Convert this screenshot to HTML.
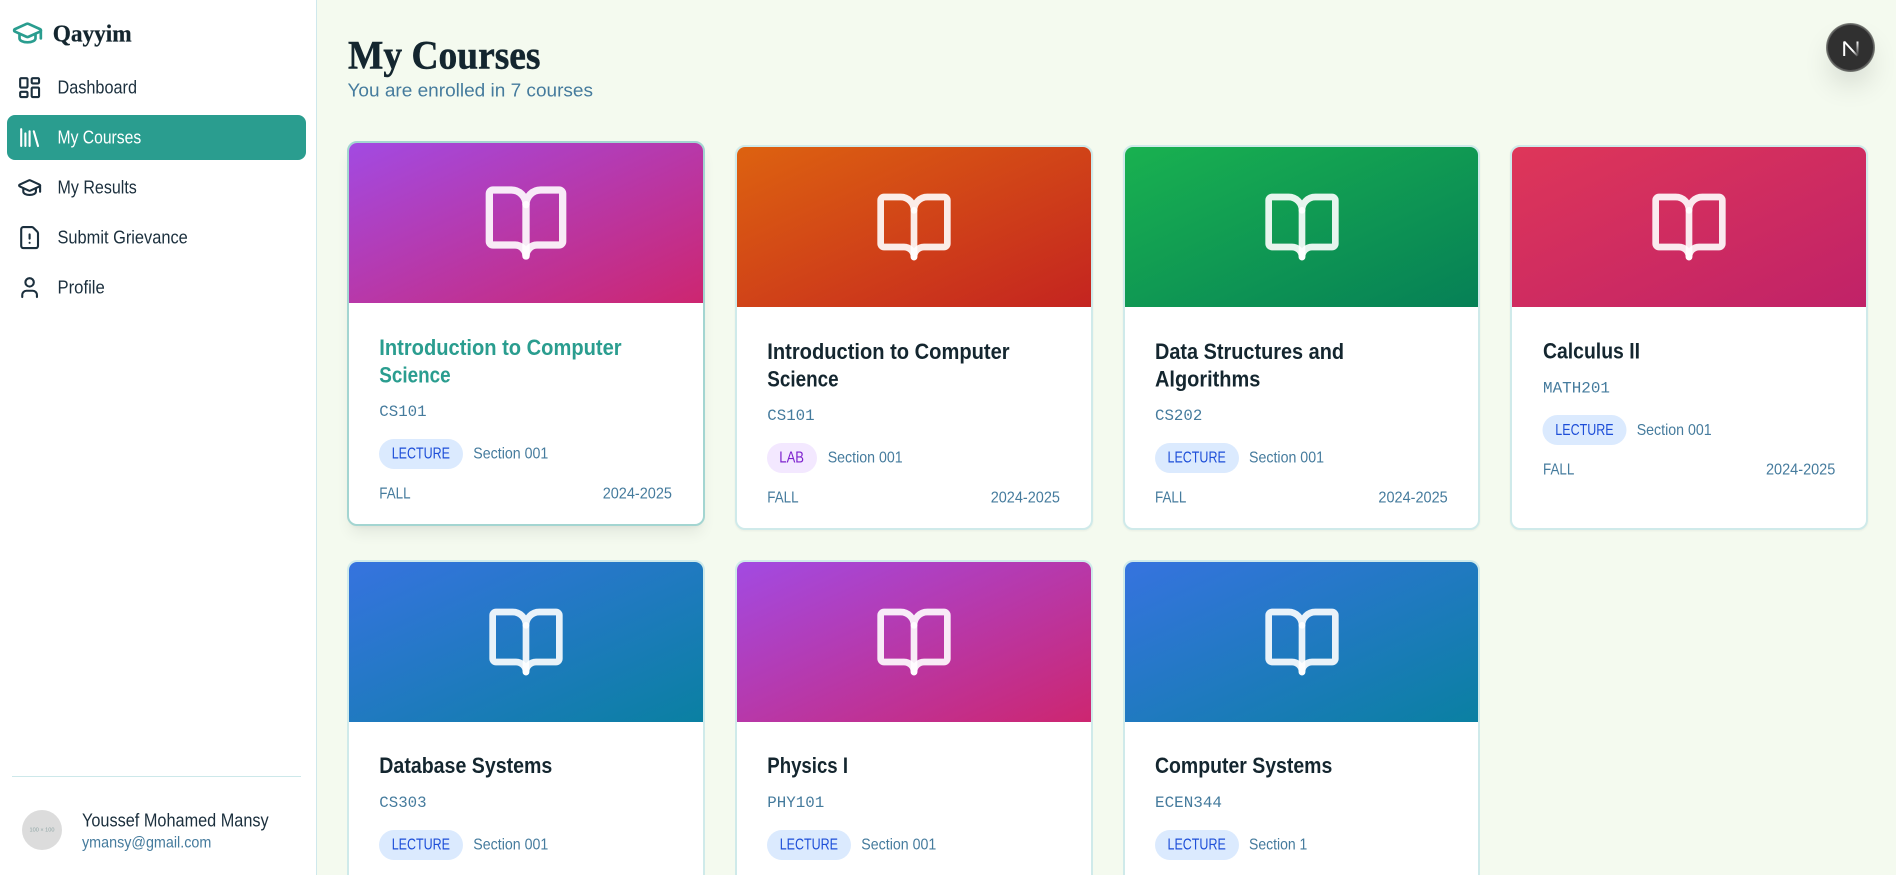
<!DOCTYPE html>
<html lang="en">
<head>
<meta charset="utf-8">
<title>My Courses</title>
<style>
html,body{margin:0;padding:0;width:1896px;height:875px;overflow:hidden;background:#f4faef;font-family:"Liberation Sans",sans-serif}
#page{position:relative;width:1896px;height:875px;overflow:hidden;background:#f4faef}
.abs{position:absolute}
#sidebar{left:0;top:0;width:316px;height:875px;background:#fff;border-right:1px solid #cfe8ec}
#active{left:7px;top:115px;width:299px;height:45px;border-radius:8px;background:#2a9d8f}
#divider{left:12px;top:776px;width:289px;height:1px;background:#cde8ea}
#avatar{left:22px;top:810px;width:40px;height:40px;border-radius:50%;background:#dcdcdc}
.card{position:absolute;box-sizing:border-box;width:358px;background:#fff;border:2px solid #cfeaea;border-radius:10px;overflow:hidden;box-shadow:0 1px 2px rgba(0,0,0,.05)}
.card.cut{height:315px;border-bottom:0;border-radius:10px 10px 0 0;box-shadow:none}
.card.hov{border-color:#a3d5d1;box-shadow:0 10px 15px -3px rgba(0,0,0,.07),0 4px 6px -4px rgba(0,0,0,.07)}
.head{height:160px}
.purple{background:linear-gradient(to bottom right,#a24ae2,#cd2670)}
.orange{background:linear-gradient(to bottom right,#dd6210,#c42420)}
.green{background:linear-gradient(to bottom right,#19b150,#068056)}
.rose{background:linear-gradient(to bottom right,#de3659,#c02268)}
.blue{background:linear-gradient(to bottom right,#3673df,#0a80a2)}
#nbtn{left:1827px;top:24px;width:47px;height:47px;border-radius:50%;background:#303030;box-shadow:0 0 0 1px rgba(0,0,0,.5),inset 0 0 0 1px rgba(255,255,255,.2),0 16px 32px -8px rgba(0,0,0,.24)}
#overlay{position:absolute;left:0;top:0}
.nav{font:18px "Liberation Sans",sans-serif;fill:#1b2f3d}
.t{font:bold 22px "Liberation Sans",sans-serif;fill:#14262f}
.c{font:16px "Liberation Mono",monospace;fill:#457b9d}
.b{font:16px "Liberation Sans",sans-serif;fill:#1d4ed8}
.s{font:16px "Liberation Sans",sans-serif;fill:#457b9d}
.ic{fill:none;stroke:#1b2f3d;stroke-width:2;stroke-linecap:round;stroke-linejoin:round}
.bk{fill:none;stroke:rgba(255,255,255,.9);stroke-width:2;stroke-linecap:round;stroke-linejoin:round}
</style>
</head>
<body>
<div id="page">
<div id="sidebar" class="abs"></div>
<div id="active" class="abs"></div>
<div id="divider" class="abs"></div>
<div id="avatar" class="abs"></div>

<div class="card hov" style="left:347px;top:141px;height:385px"><div class="head purple"></div></div>
<div class="card" style="left:735px;top:145px;height:385px"><div class="head orange"></div></div>
<div class="card" style="left:1123px;top:145px;width:357px;height:385px"><div class="head green"></div></div>
<div class="card" style="left:1510px;top:145px;height:385px"><div class="head rose"></div></div>
<div class="card cut" style="left:347px;top:560px"><div class="head blue"></div></div>
<div class="card cut" style="left:735px;top:560px"><div class="head purple"></div></div>
<div class="card cut" style="left:1123px;top:560px;width:357px"><div class="head blue"></div></div>

<div id="nbtn" class="abs"></div>

<svg id="overlay" width="1896" height="875" viewBox="0 0 1896 875" xmlns="http://www.w3.org/2000/svg">
<defs>
<linearGradient id="nd" x1="0" y1="0" x2="1" y2="1"><stop offset="0" stop-color="#fff"/><stop offset=".65" stop-color="#fff"/><stop offset="1" stop-color="#fff" stop-opacity=".1"/></linearGradient>
<linearGradient id="nr" gradientUnits="userSpaceOnUse" x1="0" y1="41" x2="0" y2="56"><stop offset="0" stop-color="#fff"/><stop offset="1" stop-color="#fff" stop-opacity="0"/></linearGradient>
<symbol id="book" viewBox="0 0 24 24"><path class="bk" d="M12 7v14"/><path class="bk" d="M3 18a1 1 0 0 1-1-1V4a1 1 0 0 1 1-1h5a4 4 0 0 1 4 4 4 4 0 0 1 4-4h5a1 1 0 0 1 1 1v13a1 1 0 0 1-1 1h-6a3 3 0 0 0-3 3 3 3 0 0 0-3-3z"/></symbol>
</defs>

<!-- logo -->
<g transform="translate(11.5 17) scale(1.3333)" fill="none" stroke="#2a9d8f" stroke-width="2" stroke-linecap="round" stroke-linejoin="round">
<path d="M21.42 10.922a1 1 0 0 0-.019-1.838L12.83 5.18a2 2 0 0 0-1.66 0L2.6 9.08a1 1 0 0 0 0 1.832l8.57 3.908a2 2 0 0 0 1.66 0z"/><path d="M22 10v6"/><path d="M6 12.5V16a6 3 0 0 0 12 0v-3.5"/>
</g>
<text x="52.7" y="41.5" textLength="79" lengthAdjust="spacingAndGlyphs" style="font:bold 24px 'Liberation Serif',serif;fill:#14262f;stroke:#14262f;stroke-width:.25">Qayyim</text>

<!-- nav -->
<g transform="translate(17 75) scale(1.05)" class="ic"><rect x="3" y="3" width="7" height="9" rx="1"/><rect x="14" y="3" width="7" height="5" rx="1"/><rect x="14" y="12" width="7" height="9" rx="1"/><rect x="3" y="16" width="7" height="5" rx="1"/></g>
<text class="nav" x="57.5" y="93.7" textLength="79.5" lengthAdjust="spacingAndGlyphs">Dashboard</text>

<g transform="translate(17 125) scale(1.05)" class="ic" style="stroke:#fff"><path d="m16 6 4 14"/><path d="M12 6v14"/><path d="M8 8v12"/><path d="M4 4v16"/></g>
<text class="nav" style="fill:#fff" x="57.5" y="143.7" textLength="83.7" lengthAdjust="spacingAndGlyphs">My Courses</text>

<g transform="translate(17 175) scale(1.05)" class="ic"><path d="M21.42 10.922a1 1 0 0 0-.019-1.838L12.83 5.18a2 2 0 0 0-1.66 0L2.6 9.08a1 1 0 0 0 0 1.832l8.57 3.908a2 2 0 0 0 1.66 0z"/><path d="M22 10v6"/><path d="M6 12.5V16a6 3 0 0 0 12 0v-3.5"/></g>
<text class="nav" x="57.5" y="193.7" textLength="79.3" lengthAdjust="spacingAndGlyphs">My Results</text>

<g transform="translate(17 225) scale(1.05)" class="ic"><path d="M6 22a2 2 0 0 1-2-2V4a2 2 0 0 1 2-2h8a2.4 2.4 0 0 1 1.704.706l3.588 3.588A2.4 2.4 0 0 1 20 8v12a2 2 0 0 1-2 2z"/><path d="M12 9v4"/><path d="M12 17h.01"/></g>
<text class="nav" x="57.5" y="243.7" textLength="130.3" lengthAdjust="spacingAndGlyphs">Submit Grievance</text>

<g transform="translate(17 275) scale(1.05)" class="ic"><path d="M19 21v-2a4 4 0 0 0-4-4H9a4 4 0 0 0-4 4v2"/><circle cx="12" cy="7" r="4"/></g>
<text class="nav" x="57.5" y="293.7" textLength="47.3" lengthAdjust="spacingAndGlyphs">Profile</text>

<!-- user -->
<text x="29.5" y="831.7" textLength="25" lengthAdjust="spacingAndGlyphs" style="font:5.5px 'Liberation Sans',sans-serif;fill:#8fa5a5">100 × 100</text>
<text class="nav" x="82" y="826.4" textLength="186.7" lengthAdjust="spacingAndGlyphs">Youssef Mohamed Mansy</text>
<text class="s" x="82" y="847.4" textLength="129.3" lengthAdjust="spacingAndGlyphs">ymansy@gmail.com</text>

<!-- header -->
<text x="348" y="68.3" textLength="192.5" lengthAdjust="spacingAndGlyphs" style="font:bold 40px 'Liberation Serif',serif;fill:#14262f;stroke:#14262f;stroke-width:.5">My Courses</text>
<text x="347.5" y="96.7" textLength="245.5" lengthAdjust="spacingAndGlyphs" style="font:18px 'Liberation Sans',sans-serif;fill:#457b9d">You are enrolled in 7 courses</text>

<!-- card 1 (hover) -->
<g transform="translate(348 141)">
<use href="#book" x="134" y="38" width="88" height="88"/>
<text class="t" style="fill:#2a9d8f" x="31.3" y="214" textLength="242.3" lengthAdjust="spacingAndGlyphs">Introduction to Computer</text>
<text class="t" style="fill:#2a9d8f" x="31.3" y="241.7" textLength="71.3" lengthAdjust="spacingAndGlyphs">Science</text>
<text class="c" x="31.3" y="275" textLength="47.3" lengthAdjust="spacingAndGlyphs">CS101</text>
<rect x="31" y="298" width="84" height="30" rx="15" fill="#dbeafe"/>
<text class="b" x="43.7" y="317.6" textLength="58.3" lengthAdjust="spacingAndGlyphs">LECTURE</text>
<text class="s" x="125.3" y="317.6" textLength="75" lengthAdjust="spacingAndGlyphs">Section 001</text>
<text class="s" x="31.3" y="357.7" textLength="31.3" lengthAdjust="spacingAndGlyphs">FALL</text>
<text class="s" x="254.7" y="357.7" textLength="69.3" lengthAdjust="spacingAndGlyphs">2024-2025</text>
</g>

<!-- card 2 -->
<g transform="translate(736 145)">
<use href="#book" x="138" y="42" width="80" height="80"/>
<text class="t" x="31.3" y="214" textLength="242.3" lengthAdjust="spacingAndGlyphs">Introduction to Computer</text>
<text class="t" x="31.3" y="241.7" textLength="71.3" lengthAdjust="spacingAndGlyphs">Science</text>
<text class="c" x="31.3" y="275" textLength="47.3" lengthAdjust="spacingAndGlyphs">CS101</text>
<rect x="31" y="298" width="50" height="30" rx="15" fill="#f3e8ff"/>
<text class="b" style="fill:#7e22ce" x="43.3" y="317.6" textLength="24.7" lengthAdjust="spacingAndGlyphs">LAB</text>
<text class="s" x="91.7" y="317.6" textLength="75" lengthAdjust="spacingAndGlyphs">Section 001</text>
<text class="s" x="31.3" y="357.7" textLength="31.3" lengthAdjust="spacingAndGlyphs">FALL</text>
<text class="s" x="254.7" y="357.7" textLength="69.3" lengthAdjust="spacingAndGlyphs">2024-2025</text>
</g>

<!-- card 3 -->
<g transform="translate(1124 145)">
<use href="#book" x="138" y="42" width="80" height="80"/>
<text class="t" x="31" y="214" textLength="189" lengthAdjust="spacingAndGlyphs">Data Structures and</text>
<text class="t" x="31" y="241.7" textLength="105.3" lengthAdjust="spacingAndGlyphs">Algorithms</text>
<text class="c" x="31" y="275" textLength="47.3" lengthAdjust="spacingAndGlyphs">CS202</text>
<rect x="31" y="298" width="84" height="30" rx="15" fill="#dbeafe"/>
<text class="b" x="43.5" y="317.6" textLength="58.3" lengthAdjust="spacingAndGlyphs">LECTURE</text>
<text class="s" x="125" y="317.6" textLength="75" lengthAdjust="spacingAndGlyphs">Section 001</text>
<text class="s" x="31" y="357.7" textLength="31.3" lengthAdjust="spacingAndGlyphs">FALL</text>
<text class="s" x="254.4" y="357.7" textLength="69.3" lengthAdjust="spacingAndGlyphs">2024-2025</text>
</g>

<!-- card 4 -->
<g transform="translate(1512 145)">
<use href="#book" x="137" y="42" width="80" height="80"/>
<text class="t" x="31" y="213.5" textLength="97" lengthAdjust="spacingAndGlyphs">Calculus II</text>
<text class="c" x="31" y="247.3" textLength="67" lengthAdjust="spacingAndGlyphs">MATH201</text>
<rect x="30.5" y="270" width="84" height="30" rx="15" fill="#dbeafe"/>
<text class="b" x="43.3" y="290" textLength="58.3" lengthAdjust="spacingAndGlyphs">LECTURE</text>
<text class="s" x="124.7" y="290" textLength="75" lengthAdjust="spacingAndGlyphs">Section 001</text>
<text class="s" x="31" y="329.7" textLength="31.3" lengthAdjust="spacingAndGlyphs">FALL</text>
<text class="s" x="254" y="329.7" textLength="69.3" lengthAdjust="spacingAndGlyphs">2024-2025</text>
</g>

<!-- card 5 -->
<g transform="translate(348 560)">
<use href="#book" x="138" y="42" width="80" height="80"/>
<text class="t" x="31.3" y="213" textLength="173" lengthAdjust="spacingAndGlyphs">Database Systems</text>
<text class="c" x="31.3" y="247" textLength="47.3" lengthAdjust="spacingAndGlyphs">CS303</text>
<rect x="31" y="270" width="84" height="30" rx="15" fill="#dbeafe"/>
<text class="b" x="43.7" y="289.7" textLength="58.3" lengthAdjust="spacingAndGlyphs">LECTURE</text>
<text class="s" x="125.3" y="289.7" textLength="75" lengthAdjust="spacingAndGlyphs">Section 001</text>
</g>

<!-- card 6 -->
<g transform="translate(736 560)">
<use href="#book" x="138" y="42" width="80" height="80"/>
<text class="t" x="31.3" y="213" textLength="80.7" lengthAdjust="spacingAndGlyphs">Physics I</text>
<text class="c" x="31.3" y="247" textLength="57" lengthAdjust="spacingAndGlyphs">PHY101</text>
<rect x="31" y="270" width="84" height="30" rx="15" fill="#dbeafe"/>
<text class="b" x="43.7" y="289.7" textLength="58.3" lengthAdjust="spacingAndGlyphs">LECTURE</text>
<text class="s" x="125.3" y="289.7" textLength="75" lengthAdjust="spacingAndGlyphs">Section 001</text>
</g>

<!-- card 7 -->
<g transform="translate(1124 560)">
<use href="#book" x="138" y="42" width="80" height="80"/>
<text class="t" x="31" y="213" textLength="177.3" lengthAdjust="spacingAndGlyphs">Computer Systems</text>
<text class="c" x="31" y="247" textLength="67" lengthAdjust="spacingAndGlyphs">ECEN344</text>
<rect x="31" y="270" width="84" height="30" rx="15" fill="#dbeafe"/>
<text class="b" x="43.5" y="289.7" textLength="58.3" lengthAdjust="spacingAndGlyphs">LECTURE</text>
<text class="s" x="125" y="289.7" textLength="58.3" lengthAdjust="spacingAndGlyphs">Section 1</text>
</g>

<!-- next logo -->
<path d="M1844.2 56V41.5" stroke="#fff" stroke-width="2" fill="none"/>
<path d="M1844.2 41.5L1857.5 56" stroke="url(#nd)" stroke-width="2" fill="none"/>
<path d="M1857.5 41.5V56" stroke="url(#nr)" stroke-width="2" fill="none"/>
</svg>
</div>
</body>
</html>
